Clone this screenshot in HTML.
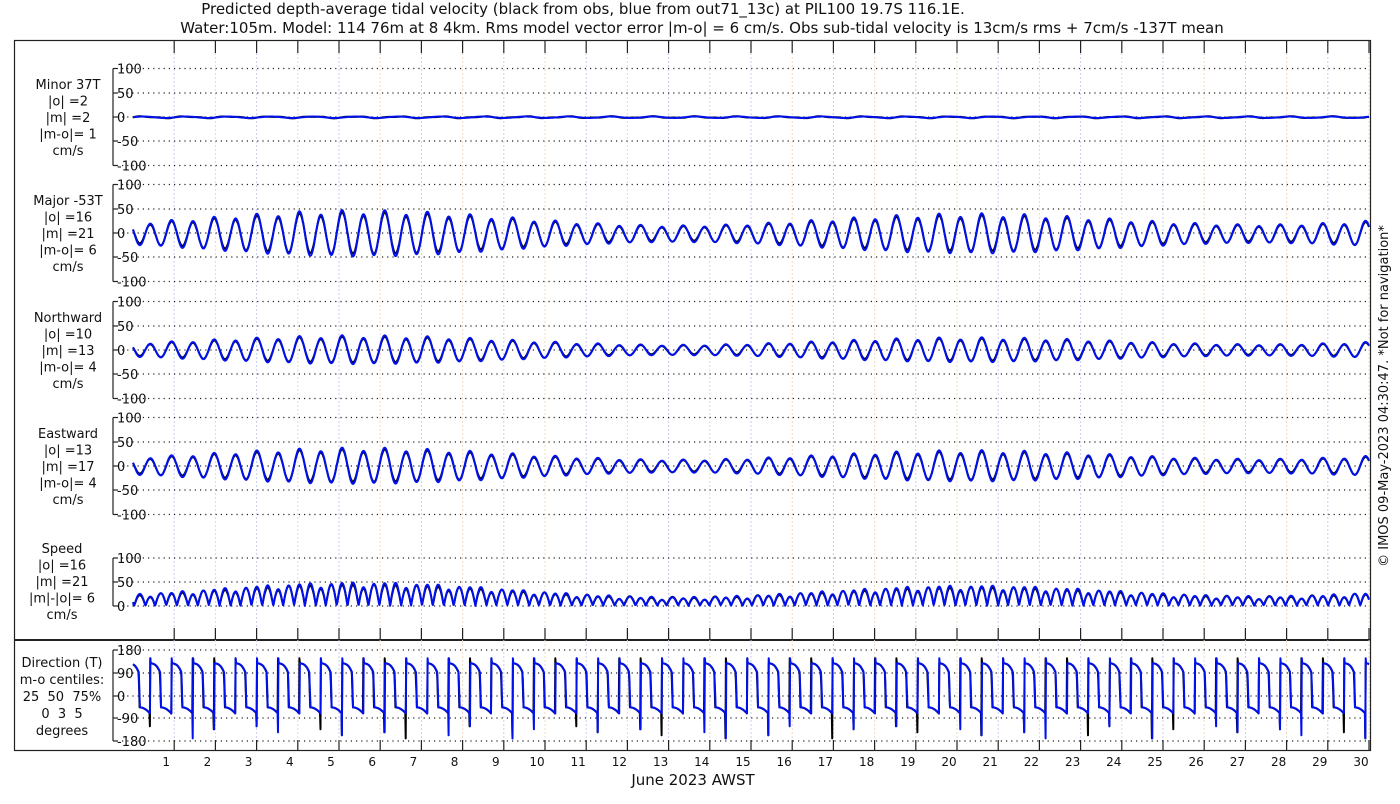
<!DOCTYPE html>
<html><head><meta charset="utf-8"><style>
body{margin:0;background:#fff;width:1400px;height:800px;overflow:hidden;font-family:"DejaVu Sans","Liberation Sans",sans-serif}
svg text{font-family:"DejaVu Sans","Liberation Sans",sans-serif;fill:#111;white-space:pre}
</style></head><body>
<svg id="s" width="1400" height="800" xmlns="http://www.w3.org/2000/svg">
<text x="583" y="14" font-size="15" text-anchor="middle">Predicted depth-average tidal velocity (black from obs, blue from out71_13c) at PIL100 19.7S 116.1E.</text>
<text x="702" y="33" font-size="15" text-anchor="middle">Water:105m. Model: 114 76m at 8 4km. Rms model vector error |m-o| = 6 cm/s. Obs sub-tidal velocity is 13cm/s rms + 7cm/s -137T mean</text>
<rect x="14.5" y="40.5" width="1356" height="710" fill="none" stroke="#222" stroke-width="1.2"/>
<line x1="14" y1="640" x2="1371" y2="640" stroke="#222" stroke-width="2"/>
<text transform="translate(1388,396) rotate(-90)" font-size="13" text-anchor="middle">© IMOS 09-May-2023 04:30:47. *Not for navigation*</text>
<text x="693" y="785" font-size="15" text-anchor="middle">June 2023 AWST</text>
<g id="g"></g>
</svg>
<script>
var g=document.getElementById('g'),h='';
var X0=133,DX=41.2;
function L(x1,y1,x2,y2,st){h+='<line x1="'+x1+'" y1="'+y1+'" x2="'+x2+'" y2="'+y2+'" '+st+'/>';}
function T(x,y,s,sz,a){h+='<text x="'+x+'" y="'+y+'" font-size="'+(sz||13)+'" text-anchor="'+(a||'middle')+'" xml:space="preserve">'+s+'</text>';}
for(var k=1;k<=30;k++){var x=X0+DX*k;
 L(x,53,x,628,'stroke="'+(k%2?'#c9cdf2':'#eed9c0')+'" stroke-width="1" stroke-dasharray="2,2"');
 L(x,640,x,740,'stroke="'+(k%2?'#c9cdf2':'#eed9c0')+'" stroke-width="1" stroke-dasharray="2,2"');
 L(x,40,x,53,'stroke="#222" stroke-width="1.2"');L(x,628,x,640,'stroke="#222" stroke-width="1.2"');L(x,740,x,751,'stroke="#222" stroke-width="1.2"');
 T(x-8,766,k,12);}
function axis(ticks,top,bot){
 L(113,top,113,bot,'stroke="#222" stroke-width="1.2"');
 ticks.forEach(function(t){L(113,t[1],118,t[1],'stroke="#222" stroke-width="1.2"');
  L(122,t[1],1370,t[1],'stroke="#222" stroke-width="1.2" stroke-dasharray="1.2,4"');
  T(117,t[1]+5,t[0],13,'start');});}
var P=[[117,['Minor 37T','|o| =2','|m| =2','|m-o|= 1','cm/s'],3],[233,['Major -53T','|o| =16','|m| =21','|m-o|= 6','cm/s'],1],[350,['Northward','|o| =10','|m| =13','|m-o|= 4','cm/s'],0.62],[466,['Eastward','|o| =13','|m| =17','|m-o|= 4','cm/s'],0.78]];
var sc=0.485;
P.forEach(function(p,i){var y0=p[0];
 axis([['100',y0-48.5],['50',y0-24],['0',y0],['-50',y0+24],['-100',y0+48.5]],y0-48.5,y0+48.5);
 p[1].forEach(function(s,j){T(68,y0-28+j*16.5,s);});});
axis([['100',558],['50',582],['0',606]],558,606);
['Speed','|o| =16','|m| =21','|m|-|o|= 6','cm/s'].forEach(function(s,j){T(62,553+j*16.5,s);});
axis([['180',650],['90',673],['0',696],['-90',718],['-180',741]],650,741);
['Direction (T)','m-o centiles:','25  50  75%','0  3  5','degrees'].forEach(function(s,j){T(62,667+j*17,s);});
function env(t){return 28+12*Math.cos(2*Math.PI*(t-5.5)/14.77)-3*Math.cos(2*Math.PI*(t-19)/27);}
function maj(t,m){var A=env(t)*(m?1.05:0.95);var ph=2*Math.PI*t/0.5175+1.2;return A*Math.cos(ph)+(m?0:1.5)*Math.sin(ph*0.5)+0.1*A*Math.cos(ph/2+0.3)-2;}
var N=3000;
function poly(f,sy,y0,col,w){var d='';for(var i=0;i<=N;i++){var t=i/N*30,x=X0+t*DX,v=f(t);var y=y0-v*sy;d+=(i?'L':'M')+x.toFixed(1)+','+y.toFixed(1);}
 h+='<path d="'+d+'" fill="none" stroke="'+col+'" stroke-width="'+w+'" stroke-linejoin="round"/>';}
var mods=[function(t,m){return 1.5*Math.sin(2*Math.PI*t/1.03)+(m?0:0.8*Math.sin(2*Math.PI*t/0.5))-0.5;},
 function(t,m){return maj(t,m);},function(t,m){return 0.62*maj(t,m)+1;},function(t,m){return 0.78*maj(t,m)+1;}];
P.forEach(function(p,i){poly(function(t){return mods[i](t,0);},sc,p[0],'#000',2);poly(function(t){return mods[i](t,1);},sc,p[0],'#0010ee',2);});
function spd(t,m){var a=maj(t,m),b=mods[0](t,m);return Math.sqrt(a*a+b*b)+(m?0:1);}
poly(function(t){return spd(t,0);},sc,606,'#000',2);poly(function(t){return spd(t,1);},sc,606,'#0010ee',2);
function dir(t,m){var per=0.5175,ph=((t/per+0.19+(m?0:0.01))%1+1)%1;
 var v; if(ph<0.5){v=130-40*Math.pow(ph/0.5,3)-10*ph;} else {var q=(ph-0.5)/0.5;v=-45-25*q*q;}
 var c=Math.floor(t/per+0.19);
 if(ph>0.47&&ph<0.5)v=130-80*(ph-0.47)/0.03-60;
 if(ph>0.985&&(c%3!=1))v=-120-60*((c*7)%5)/5;
 if(ph<0.012)v=150;
 return v;}
poly(function(t){return dir(t,0);},0.2522,696,'#000',2);poly(function(t){return dir(t,1);},0.2522,696,'#0010ee',2);
g.innerHTML=h;
</script>
</body></html>
